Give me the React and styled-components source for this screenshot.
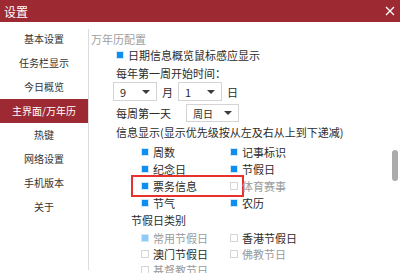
import React from 'react';
import styled, {createGlobalStyle, css} from 'styled-components';

const brandRed = '#9d2a33';
const checkBlue = '#0d8ef0';
const textColor = '#2b2b2b';

const GlobalStyle = createGlobalStyle`
  html, body {
    margin: 0;
    padding: 0;
    background: #fff;
  }

  body {
    font-family: "Noto Sans CJK SC", "Noto Sans", sans-serif;
    color: ${textColor};
  }
`;

const Window = styled.div`
  width: 400px;
  height: 273px;
  display: flex;
  flex-direction: column;
  overflow: hidden;
  background: #fff;
`;

const TitleBar = styled.div`
  height: 22px;
  flex: none;
  display: flex;
  align-items: center;
  justify-content: space-between;
  padding: 0 5px 0 4px;
  background: ${brandRed};
  color: #fff;
  font-size: 12px;
`;

const Body = styled.div`
  flex: 1;
  display: flex;
  min-height: 0;
`;

const Sidebar = styled.div`
  width: 88px;
  flex: none;
  padding-top: 5px;
`;

const NavItem = styled.div`
  height: 24px;
  line-height: 24px;
  text-align: center;
  font-size: 10px;
  color: #333;

  ${props => props.active && css`
    background: ${brandRed};
    color: #fff;
  `}
`;

const Divider = styled.div`
  width: 1px;
  flex: none;
  margin: 7px 0 3px;
  background: #dcdcdc;
`;

const Content = styled.div`
  flex: 1;
  padding: 9px 0 0 2px;
  font-size: 11px;
`;

const SectionTitle = styled.div`
  height: 16px;
  line-height: 16px;
  color: #a0a0a0;
`;

const Inner = styled.div`
  margin-left: 25px;
`;

const Line = styled.div`
  height: 16px;
  line-height: 16px;
  margin-top: ${props => props.gap || 0}px;
  margin-left: ${props => props.indent || 0}px;
  white-space: nowrap;
`;

const Item = styled.label`
  position: relative;
  display: flex;
  align-items: center;
  gap: 4px;
  height: ${props => props.rowHeight || 16}px;
  white-space: nowrap;

  ${props => props.highlight && css`
    &::after {
      content: '';
      position: absolute;
      left: -10px;
      right: -14px;
      top: -2px;
      bottom: -3px;
      border: 2px solid #e8312c;
    }
  `}
`;

const Box = styled.span`
  width: 8px;
  height: 8px;
  flex: none;
  box-sizing: border-box;
  border: 1px solid #d6d6d6;
  background: #fff;

  ${props => props.checked && css`
    border-color: #cfe7fb;
    background: ${props.disabled ? '#8ec9f8' : checkBlue};
  `}
`;

const Label = styled.span`
  color: ${props => (props.dim ? '#9a9a9a' : 'inherit')};
`;

const SelectRow = styled.div`
  display: flex;
  align-items: center;
  gap: 5px;
  margin: 1px 0 0 -3px;
  height: 19px;
`;

const Select = styled.div`
  width: ${props => props.width}px;
  height: ${props => props.height || 19}px;
  box-sizing: border-box;
  display: flex;
  align-items: center;
  justify-content: space-between;
  padding: 0 6px;
  border: 1px solid #d4d4d4;
  background: #fff;
  font-size: ${props => (props.small ? 10 : 11)}px;
`;

const Arrow = styled.span`
  width: 0;
  height: 0;
  border-left: 4px solid transparent;
  border-right: 4px solid transparent;
  border-top: 4px solid #3c3c3c;
`;

const WeekRow = styled.div`
  display: flex;
  align-items: center;
  gap: 15px;
  height: 18px;
  margin-top: 3px;
`;

const Grid = styled.div`
  display: grid;
  grid-template-columns: 89px 89px;
  margin-left: ${props => props.indent}px;
  margin-top: ${props => props.gap || 0}px;
`;

const ScrollTrack = styled.div`
  width: 10px;
  flex: none;
  display: flex;
  justify-content: center;
`;

const ScrollThumb = styled.div`
  width: 6px;
  height: 31px;
  margin-top: 128px;
  border-radius: 3px;
  background: #ababab;
`;

const CloseIcon = () => (
  <svg width="10" height="10" viewBox="0 0 10 10">
    <path d="M1 1L9 9M9 1L1 9" stroke="#fff" strokeWidth="1.3" />
  </svg>
);

const navItems = ['基本设置', '任务栏显示', '今日概览', '主界面/万年历', '热键', '网络设置', '手机版本', '关于'];

const infoItems = [
  {label: '周数', checked: true},
  {label: '记事标识', checked: true},
  {label: '纪念日', checked: true},
  {label: '节假日', checked: true},
  {label: '票务信息', checked: true, highlight: true},
  {label: '体育赛事', checked: false, dim: true},
  {label: '节气', checked: true},
  {label: '农历', checked: true},
];

const holidayItems = [
  {label: '常用节假日', checked: true, disabled: true, dim: true},
  {label: '香港节假日', checked: false},
  {label: '澳门节假日', checked: false},
  {label: '佛教节日', checked: false, dim: true},
  {label: '基督教节日', checked: false, dim: true},
];

const Option = ({item, rowHeight}) => (
  <Item rowHeight={rowHeight} highlight={item.highlight}>
    <Box checked={item.checked} disabled={item.disabled} />
    <Label dim={item.dim}>{item.label}</Label>
  </Item>
);

export default function App() {
  return (
    <>
      <GlobalStyle />
      <Window>
        <TitleBar>
          <span>设置</span>
          <CloseIcon />
        </TitleBar>
        <Body>
          <Sidebar>
            {navItems.map(name => (
              <NavItem key={name} active={name === '主界面/万年历'}>{name}</NavItem>
            ))}
          </Sidebar>
          <Divider />
          <Content>
            <SectionTitle>万年历配置</SectionTitle>
            <Inner>
              <Item>
                <Box checked />
                <span>日期信息概览鼠标感应显示</span>
              </Item>
              <Line gap={2}>每年第一周开始时间：</Line>
              <SelectRow>
                <Select width={44}>9<Arrow /></Select>
                <span>月</span>
                <Select width={44}>1<Arrow /></Select>
                <span>日</span>
              </SelectRow>
              <WeekRow>
                <span>每周第一天</span>
                <Select width={53} height={18} small>周日<Arrow /></Select>
              </WeekRow>
              <Line gap={2}>信息显示(显示优先级按从左及右从上到下递减)</Line>
              <Grid indent={25} gap={3}>
                {infoItems.map(item => (
                  <Option key={item.label} item={item} rowHeight={17} />
                ))}
              </Grid>
              <Line gap={1} indent={15}>节假日类别</Line>
              <Grid indent={25} gap={2}>
                {holidayItems.map(item => (
                  <Option key={item.label} item={item} rowHeight={16} />
                ))}
              </Grid>
            </Inner>
          </Content>
          <ScrollTrack>
            <ScrollThumb />
          </ScrollTrack>
        </Body>
      </Window>
    </>
  );
}
